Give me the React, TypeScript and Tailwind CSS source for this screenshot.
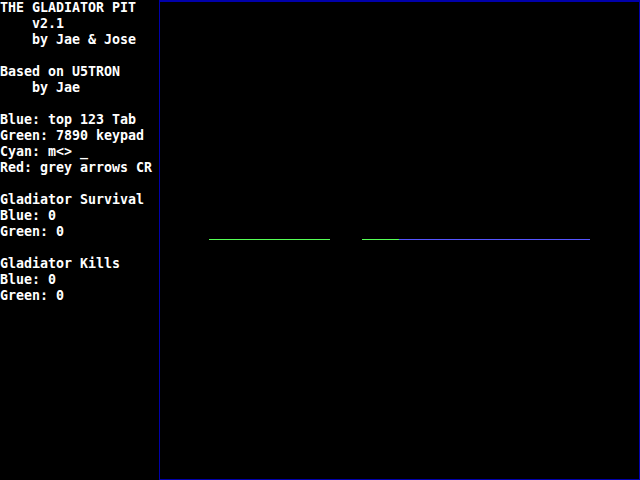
import React from 'react';

const lines: string[] = [
  'THE GLADIATOR PIT',
  '    v2.1',
  '    by Jae & Jose',
  '',
  'Based on U5TRON',
  '    by Jae',
  '',
  'Blue: top 123 Tab',
  'Green: 7890 keypad',
  'Cyan: m<> _',
  'Red: grey arrows CR',
  '',
  'Gladiator Survival',
  'Blue: 0',
  'Green: 0',
  '',
  'Gladiator Kills',
  'Blue: 0',
  'Green: 0',
];

export default function App() {
  return (
    <div className="flex w-[640px] h-[480px] bg-black overflow-hidden">
      <div
        className="w-[159px] shrink-0 text-white text-[13.3px] font-bold leading-[16px] whitespace-pre"
        style={{ fontFamily: '"DejaVu Sans Mono", "Liberation Mono", monospace' }}
      >
        {lines.map((l, i) => (
          <div key={i} className="h-4">{l}</div>
        ))}
      </div>
      {/* arena */}
      <div className="w-[481px] h-[480px] border border-[#0000aa] border-t-2">
        <svg width="479" height="477" className="block">
          <line x1="49" y1="237.5" x2="170" y2="237.5" stroke="#55ff55" strokeWidth="1" />
          <line x1="202" y1="237.5" x2="239" y2="237.5" stroke="#55ff55" strokeWidth="1" />
          <line x1="239" y1="237.5" x2="430" y2="237.5" stroke="#5555ff" strokeWidth="1" />
        </svg>
      </div>
    </div>
  );
}
